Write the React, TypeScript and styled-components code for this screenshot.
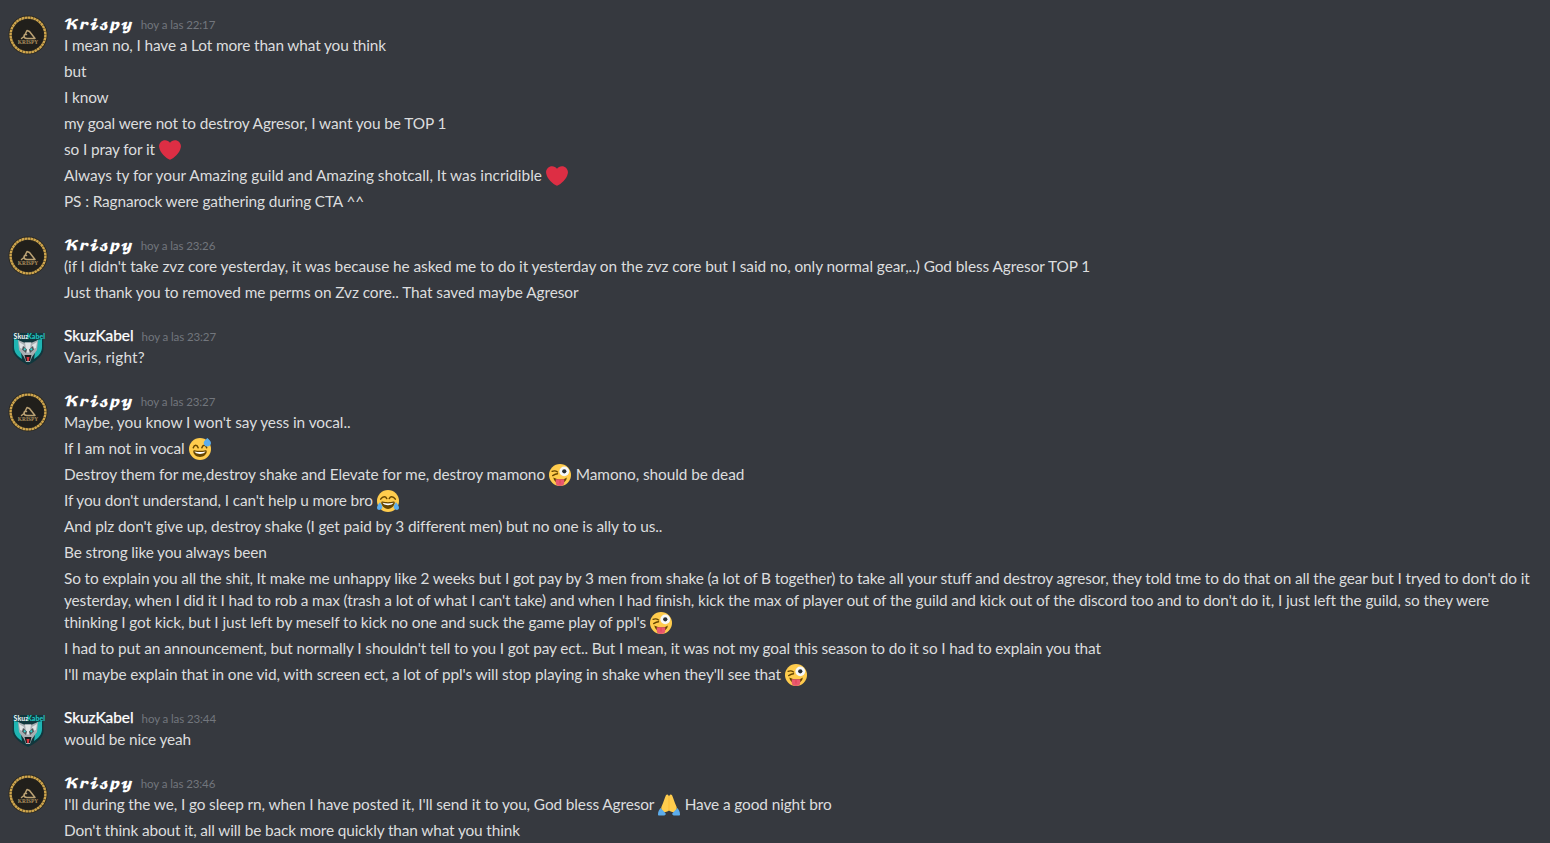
import React from "react";
import styled, { createGlobalStyle } from "styled-components";

const Global = createGlobalStyle`
  html, body { margin: 0; padding: 0; background: #36393f; }
  body { overflow: hidden; height: 843px; }
`;

const Page = styled.main`
  height: 843px;
  overflow: hidden;
  box-sizing: border-box;
  padding: 13px 0 0 8px;
  background: #36393f;
  font-family: Lato, "Noto Sans", sans-serif;
  font-size: 15.4px;
  color: #dcddde;
`;
const Group = styled.article`
  display: flex;
  gap: 16px;
  margin-bottom: 18.1px;
`;
const AvatarBox = styled.div`
  flex: 0 0 40px;
  width: 40px;
  height: 40px;
  margin-top: 2px;
`;
const Content = styled.div`
  flex: 1;
  min-width: 0;
`;
const Header = styled.header<{ $drop?: boolean }>`
  display: flex;
  align-items: baseline;
  box-sizing: border-box;
  height: 21px;
  line-height: 21px;
  padding-top: ${(p) => (p.$drop ? "1px" : "0")};
`;
const Name = styled.span`
  color: #fff;
  font-size: 15.4px;
  margin-right: 8px;
  -webkit-text-stroke: 0.25px #fff;
`;
const KrispyName = styled(Name)`
  font-family: "DejaVu Math TeX Gyre", "DejaVu Serif", serif;
  font-size: 13.5px;
  font-weight: 700;
  -webkit-text-stroke: 0;
`;
const Time = styled.time`
  color: #72767d;
  font-size: 11.5px;
  letter-spacing: -0.1px;
`;
const Line = styled.p<{ $track?: number }>`
  margin: 0 0 4px;
  line-height: 22px;
  white-space: nowrap;
  letter-spacing: ${(p) => p.$track ?? -0.13}px;
`;
const Wrapped = styled.span`
  display: block;
`;
const Emoji = styled.svg`
  display: inline-block;
  width: 22px;
  height: 22px;
  vertical-align: baseline;
  margin: -6px 0.5px -6px;
`;

const Heart = () => (
  <Emoji viewBox="0 0 36 36"><path fill="#DD2E44" d="M35.885 11.833c0-5.45-4.418-9.868-9.867-9.868-3.308 0-6.227 1.633-8.018 4.129-1.791-2.496-4.71-4.129-8.017-4.129-5.45 0-9.868 4.417-9.868 9.868 0 .772.098 1.52.266 2.241C1.751 22.587 11.216 31.568 18 34.034c6.783-2.466 16.249-11.447 17.617-19.959.17-.721.268-1.469.268-2.242z" /></Emoji>
);
const Sweat = () => (
  <Emoji viewBox="0 0 36 36">
    <circle fill="#FFCC4D" cx="18" cy="18" r="18" />
    <path fill="#664500" d="M18 21c-3.623 0-6.027-.422-9-1-.679-.131-2 0-2 2 0 4 4.595 9 11 9 6.404 0 11-5 11-9 0-2-1.321-2.132-2-2-2.973.578-5.377 1-9 1z" />
    <path fill="#FFF" d="M9 22s3 1 9 1 9-1 9-1-2 4-9 4-9-4-9-4z" />
    <path fill="none" stroke="#664500" strokeWidth="2.400" strokeLinecap="round" d="M7 16c1-3 2.500-4 4-4s3 1 4 4M21 16c1-3 2.500-4 4-4s3 1 4 4" />
    <path fill="#5DADEC" d="M24 8c0 3 2.500 6 6 6s6-3 6-6c0-3-4-6-6-8-2 2-6 5-6 8z" />
  </Emoji>
);
const Wink = () => (
  <Emoji viewBox="0 0 36 36">
    <circle fill="#FFCC4D" cx="18" cy="18" r="18" />
    <circle fill="#F5F8FA" cx="25" cy="12" r="8" />
    <circle fill="#292F33" cx="25" cy="12" r="3.500" />
    <path fill="none" stroke="#664500" strokeWidth="2.200" strokeLinecap="round" d="M5 12c3-1 6-1 9 1M6 19c3-2 5-3 8-3" />
    <path fill="#664500" d="M7 22c4 2 8 3 12 3s8-1 10-3c0 6-5 9-11 9S8 28 7 22z" />
    <path fill="#E8596E" d="M11 25h14v6c0 3-3 5-7 5s-7-2-7-5z" />
    <path fill="#DD2E44" d="M17.500 26h1v6h-1z" />
  </Emoji>
);
const Joy = () => (
  <Emoji viewBox="0 0 36 36">
    <circle fill="#FFCC4D" cx="18" cy="18" r="18" />
    <path fill="none" stroke="#664500" strokeWidth="2.400" strokeLinecap="round" d="M6 15c2-3 4-4 6-4s3 1 4 3M20 14c1-2 2-3 4-3s4 1 6 4" />
    <path fill="#664500" d="M18 20c-3.600 0-6-.4-9-1-.7-.1-2 0-2 2 0 4 4.600 10 11 10s11-6 11-10c0-2-1.300-2.100-2-2-3 .6-5.400 1-9 1z" />
    <path fill="#FFF" d="M9 21s3 1 9 1 9-1 9-1-2 4-9 4-9-4-9-4z" />
    <path fill="#5DADEC" d="M0 29c0-3 3-7 5-9 1 2 2 3 3 5 1.500 3 .5 5.500-2 7C3 33.500 0 32 0 29zm36 0c0-3-3-7-5-9-1 2-2 3-3 5-1.500 3-.5 5.500 2 7 3 1.500 6 0 6-3z" />
  </Emoji>
);
const Pray = () => (
  <Emoji viewBox="0 0 36 36">
    <path fill="#FFCC4D" d="M17 2c-1-2-3-1.500-4 0-2 4-4 12-7 18-1 2-1 4 0 6l3 4c3 0 7-1 9-3V4zm2 0c1-2 3-1.500 4 0 2 4 4 12 7 18 1 2 1 4 0 6l-3 4c-3 0-7-1-9-3V4z" />
    <path fill="#F4AB1F" d="M17.600 5h.8v22h-.8z" />
    <path fill="#5DADEC" d="M4 23l8 8c1 1 1 2 0 3-.5.7-1 1-2 1H1c-1 0-1-1-1-2 0-4 2-7 4-10zm28 0l-8 8c-1 1-1 2 0 3 .5.7 1 1 2 1h9c1 0 1-1 1-2 0-4-2-7-4-10z" />
  </Emoji>
);

const KrispyAvatar = () => (
  <AvatarBox>
    <svg width="40" height="40" viewBox="0 0 40 40">
      <circle cx="20" cy="20" r="19.500" fill="#2a271f" />
      <circle cx="20" cy="20" r="17.400" fill="none" stroke="#cfa54c" strokeWidth="2.400" strokeDasharray="2.600 0.400" />
      <circle cx="20" cy="20" r="15.600" fill="#211f1b" />
      <path fill="none" stroke="#bba274" strokeWidth="1.500" strokeLinejoin="round" strokeLinecap="round" d="M13.500 23.500l2.500-2 3-6 2.500 1 5.500 7h-8c-2 0-3-1-3-2.500 0-1 1-2 2.500-1.500" />
      <text x="20" y="29.200" textAnchor="middle" fontSize="5.400" fontFamily="Liberation Serif, serif" fontWeight="700" fill="#ad9160">KRISPY</text>
    </svg>
  </AvatarBox>
);
const SkuzAvatar = () => (
  <AvatarBox>
    <svg width="40" height="40" viewBox="0 0 40 40">
      <path fill="#10373d" d="M5 6h30l.5 16c0 7-9 13-15.500 16C14 35 4.500 29 4.500 22z" />
      <path fill="#1fb5b3" d="M6 12l5 1 3 19c-5-3-8-7-8-12zm28 0l-5 1-3 19c5-3 8-7 8-12z" />
      <path fill="#a9afb3" d="M10 13l6 2.500h8l6-2.500-1 10-5 7-2 5h-4l-2-5-5-7z" />
      <path fill="#dfe3e5" d="M17 15.500h6l-1.500 10h-3zM11 15l5 3-1 4-3-1zm18 0l-5 3 1 4 3-1z" />
      <path fill="#4c5357" d="M15 19l4 3.500-1 3.500-4-3.500zm10 0l-4 3.500 1 3.500 4-3.500z" />
      <path fill="#1a1d20" d="M16.500 28h7l-1.500 6h-4z" />
      <path fill="#d8323c" d="M18.500 30h3l-.7 4h-1.600z" />
      <circle cx="16.700" cy="22.300" r="1.100" fill="#35d4d0" />
      <circle cx="23.300" cy="22.300" r="1.100" fill="#35d4d0" />
      <text x="13" y="11.500" textAnchor="middle" fontSize="7" fontFamily="Lato, sans-serif" fontWeight="900" fill="#e8eef0">Skuz</text>
      <text x="28" y="11.500" textAnchor="middle" fontSize="7" fontFamily="Lato, sans-serif" fontWeight="900" fill="#22c4c2">Kabel</text>
    </svg>
  </AvatarBox>
);

type MsgProps = { who: "k" | "s"; time: string; children: React.ReactNode };
const Message = ({ who, time, children }: MsgProps) => (
  <Group>
    {who === "k" ? <KrispyAvatar /> : <SkuzAvatar />}
    <Content>
      <Header $drop={who === "k"}>
        {who === "k" ? <KrispyName>𝓚𝓻𝓲𝓼𝓹𝔂</KrispyName> : <Name>SkuzKabel</Name>}
        <Time>hoy a las {time}</Time>
      </Header>
      {children}
    </Content>
  </Group>
);

export default function App() {
  return (
    <Page>
      <Global />
      <Message who="k" time="22:17">
        <Line>I mean no, I have a Lot more than what you think</Line>
        <Line>but</Line>
        <Line>I know</Line>
        <Line $track={-0.1}>my goal were not to destroy Agresor, I want you be TOP 1</Line>
        <Line>so I pray for it <Heart /></Line>
        <Line $track={0}>Always ty for your Amazing guild and Amazing shotcall, It was incridible <Heart /></Line>
        <Line>PS : Ragnarock were gathering during CTA ^^</Line>
      </Message>
      <Message who="k" time="23:26">
        <Line $track={-0.07}>(if I didn't take zvz core yesterday, it was because he asked me to do it yesterday on the zvz core but I said no, only normal gear,..) God bless Agresor TOP 1</Line>
        <Line $track={-0.08}>Just thank you to removed me perms on Zvz core.. That saved maybe Agresor</Line>
      </Message>
      <Message who="s" time="23:27">
        <Line $track={0.18}>Varis, right?</Line>
      </Message>
      <Message who="k" time="23:27">
        <Line $track={-0.06}>Maybe, you know I won't say yess in vocal..</Line>
        <Line>If I am not in vocal <Sweat /></Line>
        <Line $track={-0.08}>Destroy them for me,destroy shake and Elevate for me, destroy mamono <Wink /> Mamono, should be dead</Line>
        <Line>If you don't understand, I can't help u more bro <Joy /></Line>
        <Line $track={-0.09}>And plz don't give up, destroy shake (I get paid by 3 different men) but no one is ally to us..</Line>
        <Line>Be strong like you always been</Line>
        <Line $track={-0.12}>
          <Wrapped>So to explain you all the shit, It make me unhappy like 2 weeks but I got pay by 3 men from shake (a lot of B together) to take all your stuff and destroy agresor, they told tme to do that on all the gear but I tryed to don't do it</Wrapped>
          <Wrapped>yesterday, when I did it I had to rob a max (trash a lot of what I can't take) and when I had finish, kick the max of player out of the guild and kick out of the discord too and to don't do it, I just left the guild, so they were</Wrapped>
          <Wrapped>thinking I got kick, but I just left by meself to kick no one and suck the game play of ppl's <Wink /></Wrapped>
        </Line>
        <Line>I had to put an announcement, but normally I shouldn't tell to you I got pay ect.. But I mean, it was not my goal this season to do it so I had to explain you that</Line>
        <Line $track={-0.1}>I'll maybe explain that in one vid, with screen ect, a lot of ppl's will stop playing in shake when they'll see that <Wink /></Line>
      </Message>
      <Message who="s" time="23:44">
        <Line>would be nice yeah</Line>
      </Message>
      <Message who="k" time="23:46">
        <Line $track={-0.11}>I'll during the we, I go sleep rn, when I have posted it, I'll send it to you, God bless Agresor <Pray /> Have a good night bro</Line>
        <Line>Don't think about it, all will be back more quickly than what you think</Line>
      </Message>
    </Page>
  );
}
